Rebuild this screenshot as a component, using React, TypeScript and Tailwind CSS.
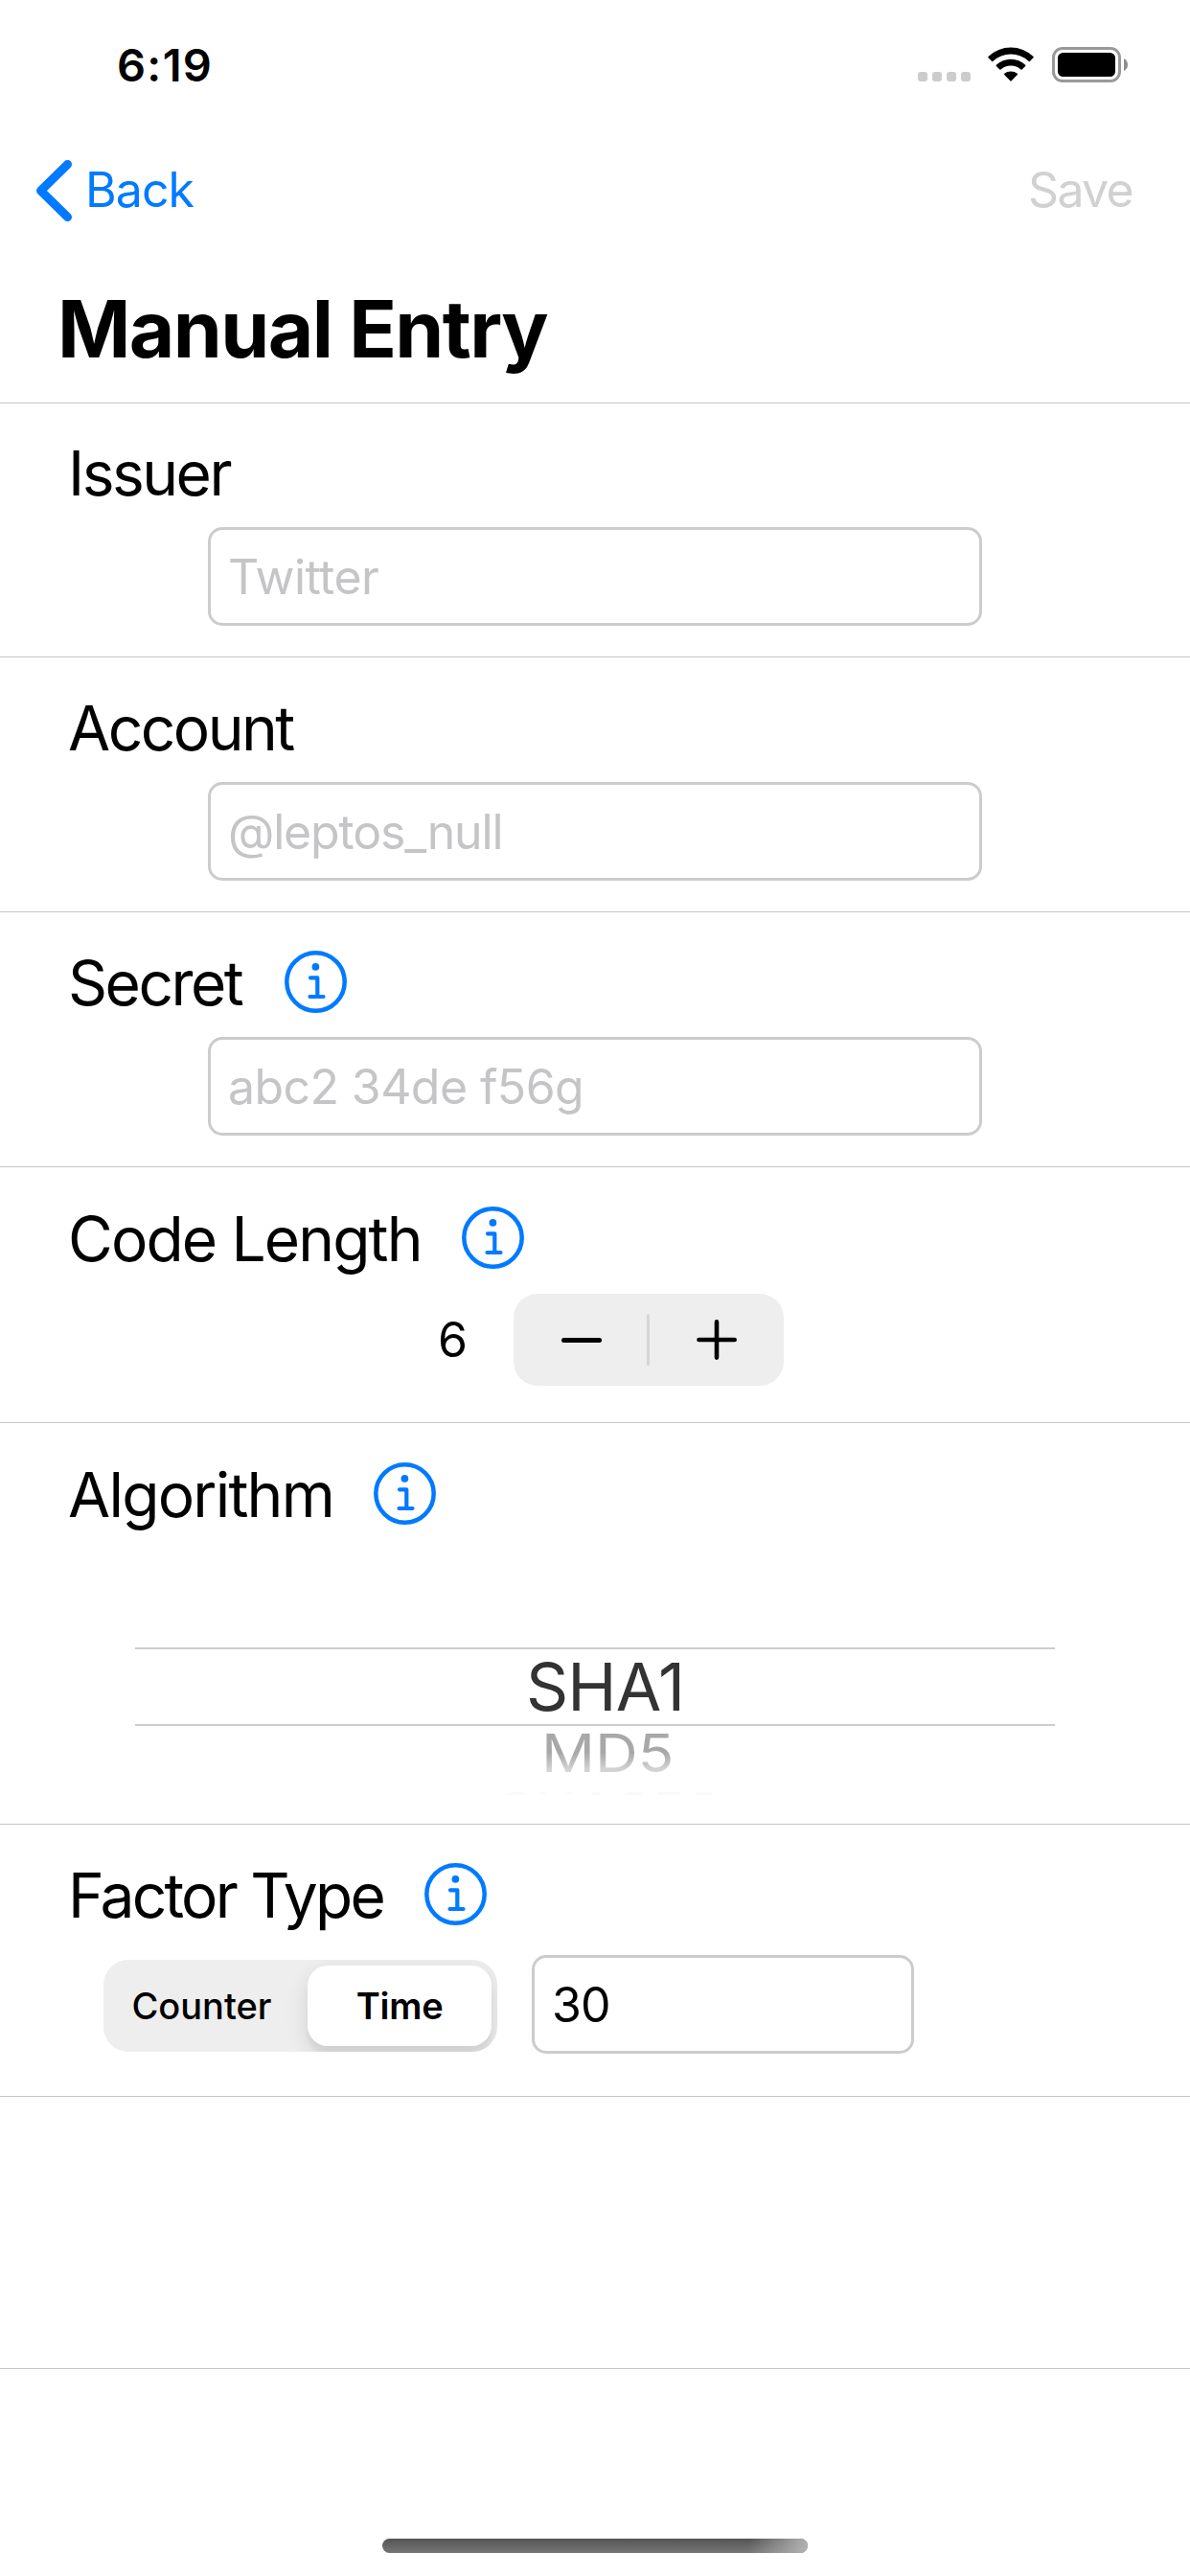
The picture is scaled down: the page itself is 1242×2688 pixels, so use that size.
import type { ReactNode } from "react";

function StatusBar() {
  return (
    <div className="flex h-[140px] justify-between pl-[122px] pr-[64px] pt-[38px]">
      <span className="text-[47px] font-semibold leading-[60px] tracking-[1.3px]">6:19</span>
      <div className="flex pt-[11px]">
        <div className="flex gap-[5px] pt-[26px]">
          {[0, 1, 2, 3].map((i) => (
            <span key={i} className="size-[10px] rounded-[3px] bg-[#cccccc]" />
          ))}
        </div>
        <svg className="ml-[18px] h-[37px] w-[48px]" viewBox="0 0 48 37">
          <path d="M.5 10A34 34 0 0 1 47.5 10Q48 10.6 47.5 11.2L43.8 15Q43.3 15.4 42.8 15A27.5 27.5 0 0 0 5.2 15Q4.7 15.4 4.2 15L.5 11.2Q0 10.6 .5 10Z" />
          <path d="M8.8 18.8A22 22 0 0 1 39.2 18.8Q39.7 19.4 39.2 20L35.6 23.6Q35 24 34.5 23.6A15.5 15.5 0 0 0 13.5 23.6Q13 24 12.4 23.6L8.8 20Q8.3 19.4 8.8 18.8Z" />
          <path d="M17.2 27.8A11 11 0 0 1 30.8 27.8Q31.2 28.4 30.8 28.9L24.7 35.3Q24 36 23.3 35.3L17.2 28.9Q16.8 28.4 17.2 27.8Z" />
        </svg>
        <svg className="ml-[19px] h-[37px] w-[80px]" viewBox="0 0 80 37">
          <rect x="1.5" y="1.5" width="69" height="34" rx="9.5" fill="none" stroke="#999999" strokeWidth="3" />
          <rect x="6" y="6" width="60" height="25" rx="5.5" />
          <path d="M75 12Q79 14.2 79 18.5Q79 22.8 75 25Z" fill="#8e8e8e" />
        </svg>
      </div>
    </div>
  );
}

function InfoIcon() {
  return (
    <svg className="size-[66px] shrink-0" viewBox="0 0 66 66" fill="none" stroke="#007aff" strokeLinecap="round" strokeLinejoin="round">
      <circle cx="32.5" cy="33.5" r="30.2" strokeWidth="4.5" />
      <circle cx="32.4" cy="17.8" r="3.9" fill="#007aff" stroke="none" />
      <path d="M27 29.3H34.3V49M26.5 49H40.5" strokeWidth="4.2" />
    </svg>
  );
}

type SectionProps = {
  className: string;
  title: string;
  titleClass: string;
  info?: boolean;
  children: ReactNode;
};

function Section({ className, title, titleClass, info, children }: SectionProps) {
  return (
    <section className={`border-b border-[#c6c6c8] ${className}`}>
      <div className="flex h-[80px] items-center pl-[71px]">
        <h2 className={`shrink-0 whitespace-nowrap pt-[3px] text-[64px] leading-[80px] ${titleClass}`}>{title}</h2>
        {info && <InfoIcon />}
      </div>
      {children}
    </section>
  );
}

function Field({ className, children }: { className: string; children: ReactNode }) {
  return (
    <div className={`flex h-[103px] items-center whitespace-pre rounded-[15px] border-[3px] border-[#cccccc] pl-[18px] text-[50px] leading-[60px] ${className}`}>
      {children}
    </div>
  );
}

export default function App() {
  return (
    <main className="h-[2688px] w-[1242px] overflow-hidden bg-white font-['Inter',sans-serif] text-black">
      <header className="h-[421px] border-b border-[#c6c6c8]">
        <StatusBar />
        <nav className="flex h-[116px] items-center justify-between pl-[38px] pr-[60px] text-[50px] leading-[60px]">
          <div className="flex items-center text-[#007aff]">
            <svg className="mt-px h-[64px] w-[38px]" viewBox="0 0 38 64" fill="none" stroke="currentColor" strokeWidth="9" strokeLinecap="round" strokeLinejoin="round">
              <path d="M32.5 4.5L4.5 32L32.5 59.5" />
            </svg>
            <span className="ml-[13px] tracking-[-0.95px]">Back</span>
          </div>
          <span className="tracking-[-1.7px] text-[#d1d1d1]">Save</span>
        </nav>
        <h1 className="mt-[38px] pl-[60px] text-[82px] font-bold leading-[100px] tracking-[-1.6px]">Manual Entry</h1>
      </header>

      <Section className="h-[265px] pt-[31px]" title="Issuer" titleClass="tracking-[-2.5px]">
        <Field className="ml-[217px] mt-[18px] w-[808px] tracking-[-0.56px] text-[#c5c5c7]">Twitter</Field>
      </Section>

      <Section className="h-[266px] pt-[32px]" title="Account" titleClass="tracking-[-2.5px]">
        <Field className="ml-[217px] mt-[18px] w-[808px] tracking-[-1.15px] text-[#c5c5c7]">@leptos_null</Field>
      </Section>

      <Section className="h-[266px] pt-[32px]" title="Secret" titleClass="w-[226px] tracking-[-2.5px]" info>
        <Field className="ml-[217px] mt-[18px] w-[808px] tracking-[-0.59px] text-[#c5c5c7]">abc2 34de f56g</Field>
      </Section>

      <Section className="h-[267px] pt-[33px]" title="Code Length" titleClass="w-[411px] tracking-[-1.85px]" info>
        <div className="mt-[19px] flex items-center pl-[457px]">
          <span className="w-[79px] text-[50px] leading-[60px]">6</span>
          <div className="flex h-[96px] w-[282px] items-center rounded-[25px] bg-[#eeeeee]">
            <svg className="h-[44px] w-[139px]" viewBox="0 0 139 44" stroke="black" strokeWidth="5" strokeLinecap="round">
              <path d="M52.5 22.5H89.5" />
            </svg>
            <span className="h-[54px] w-[3px] rounded-full bg-[#d6d6d6]" />
            <svg className="h-[44px] w-[140px]" viewBox="0 0 140 44" stroke="black" strokeWidth="4.6" strokeLinecap="round">
              <path d="M51.5 22H88.7M70 3.4V40.600" />
            </svg>
          </div>
        </div>
      </Section>

      <Section className="h-[419px] pt-[33px]" title="Algorithm" titleClass="w-[319px] tracking-[-1.75px]" info>
        <div className="ml-[141px] mt-[121px] w-[960px]">
          <div className="flex h-[82px] items-center border-y-2 border-[#cdcdcd] pl-[408px] text-[69px] leading-[78px] tracking-[-0.94px] text-[#333333]">
            SHA1
          </div>
          <div className="flex h-[56px] items-center pl-[424px]">
            <span className="scale-y-[0.895] bg-linear-to-b from-[#a8a8a8] from-50% to-[#d2d2d2] to-80% bg-clip-text text-[62px] leading-[62px] text-transparent">
              MD5
            </span>
          </div>
          <div className="mt-[13px] h-[3px] overflow-hidden pl-[379px] text-[60px] leading-[43px] tracking-[-0.5px] text-[#fafafa]">SHA256</div>
        </div>
      </Section>

      <Section className="h-[284px] pt-[32px]" title="Factor Type" titleClass="w-[372px] tracking-[-2.75px]" info>
        <div className="mt-[24px] flex items-start pl-[108px]">
          <div className="mt-[5px] flex h-[96px] w-[411px] items-center overflow-hidden rounded-[26px] bg-[#eeeeee] text-[38px]">
            <span className="w-[205px] pt-px text-center font-medium">Counter</span>
            <span className="ml-[8px] flex h-[84px] w-[192px] items-center justify-center rounded-[21px] bg-white pt-px font-semibold tracking-[-0.25px] shadow-[0_9px_24px_rgba(0,0,0,0.12),0_9px_3px_rgba(0,0,0,0.04)]">
              Time
            </span>
          </div>
          <Field className="ml-[36px] w-[399px] tracking-[-0.9px]">30</Field>
        </div>
      </Section>

      <div className="h-[284px] border-b border-[#c6c6c8]" />

      <div className="ml-[399px] mt-[177px] h-[15px] w-[444px] overflow-hidden rounded-full bg-linear-to-b from-[#545454] to-[#767676]">
        <div className="ml-auto h-full w-[72px] bg-linear-[100deg] from-transparent from-15% to-[#b4b4b4]" />
      </div>
    </main>
  );
}
